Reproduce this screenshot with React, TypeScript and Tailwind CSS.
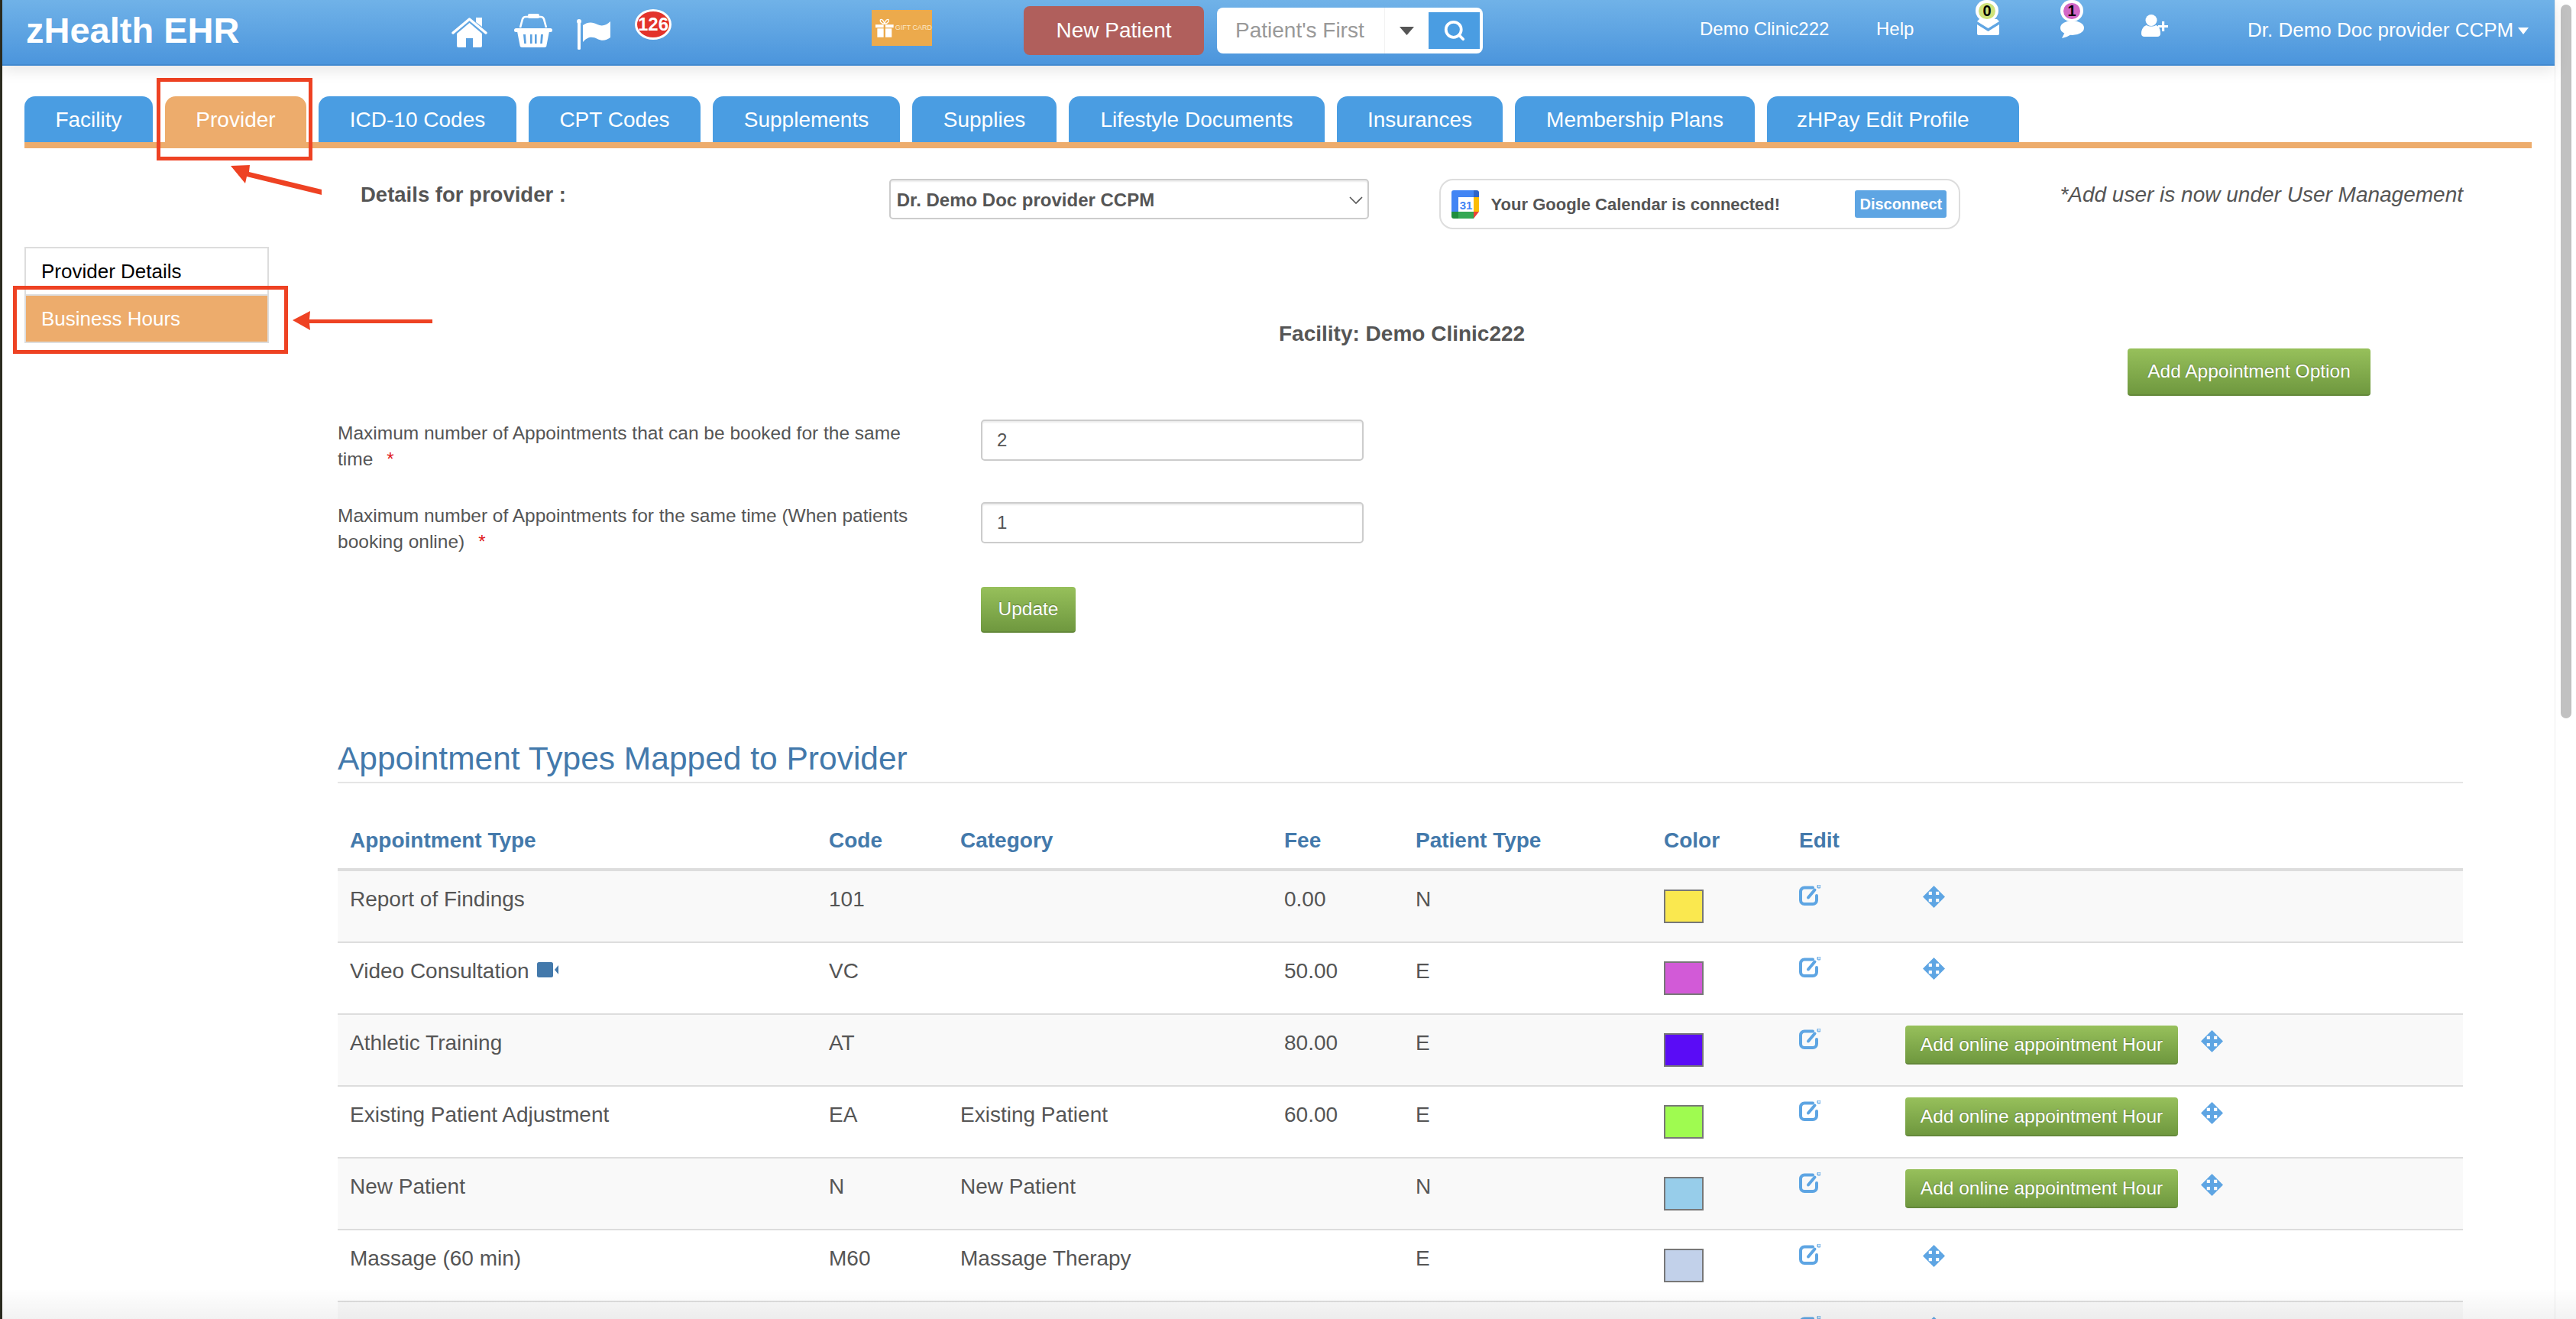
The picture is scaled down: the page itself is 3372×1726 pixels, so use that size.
import { Search } from "lucide-react";

const TABS: { label: string; width: string; active?: boolean; pad?: boolean }[] = [
  { label: "Facility", width: "w-[168px]" },
  { label: "Provider", width: "w-[185px]", active: true },
  { label: "ICD-10 Codes", width: "w-[259px]" },
  { label: "CPT Codes", width: "w-[225px]" },
  { label: "Supplements", width: "w-[245px]" },
  { label: "Supplies", width: "w-[189px]" },
  { label: "Lifestyle Documents", width: "w-[335px]" },
  { label: "Insurances", width: "w-[217px]" },
  { label: "Membership Plans", width: "w-[314px]" },
  { label: "zHPay Edit Profile", width: "w-[330px]", pad: true },
];

const ROWS: {
  name: string;
  code: string;
  category: string;
  fee: string;
  patient: string;
  color: string;
  video?: boolean;
  online?: boolean;
}[] = [
  { name: "Report of Findings", code: "101", category: "", fee: "0.00", patient: "N", color: "bg-[#fae84f]" },
  { name: "Video Consultation", code: "VC", category: "", fee: "50.00", patient: "E", color: "bg-[#d25ad7]", video: true },
  { name: "Athletic Training", code: "AT", category: "", fee: "80.00", patient: "E", color: "bg-[#5a0cf6]", online: true },
  { name: "Existing Patient Adjustment", code: "EA", category: "Existing Patient", fee: "60.00", patient: "E", color: "bg-[#9ffb50]", online: true },
  { name: "New Patient", code: "N", category: "New Patient", fee: "", patient: "N", color: "bg-[#97cdea]", online: true },
  { name: "Massage (60 min)", code: "M60", category: "Massage Therapy", fee: "", patient: "E", color: "bg-[#c2d1ea]" },
  { name: "", code: "", category: "", fee: "", patient: "", color: "bg-transparent" },
];

const GREEN_BTN =
  "rounded-[4px] border-b-2 border-[#64883a] bg-gradient-to-b from-[#97c05b] to-[#6f983f] text-[24.5px] text-white [text-shadow:0_-1px_1px_rgba(0,0,0,0.3)]";

/* ---- Header icons ---- */

function HomeIcon() {
  return (
    <svg viewBox="0 0 47 39" className="h-[39px] w-[47px]" fill="white">
      <path d="M32 0h8v12l-8-6z" />
      <path d="M2 20 23.5 2 45 20" fill="none" stroke="white" strokeWidth="3.5" strokeLinecap="round" strokeLinejoin="round" />
      <path d="M7 21 23.5 7 40 21v16a2 2 0 0 1-2 2H28V27h-9v12H9a2 2 0 0 1-2-2z" />
    </svg>
  );
}

function BasketIcon() {
  return (
    <svg viewBox="0 0 50 44" className="h-[44px] w-[50px]" fill="white">
      <path d="M8 18 11 7q1-3 4-3h20q3 0 4 3l3 11" fill="none" stroke="white" strokeWidth="2.6" />
      <rect x="18" y="0" width="15" height="6" rx="2" />
      <rect x="0" y="19" width="50" height="5" rx="2.5" />
      <path
        fillRule="evenodd"
        d="M4 23h42l-3.5 18a3 3 0 0 1-3 3h-29a3 3 0 0 1-3-3zM12 27l1.2 12h2.6L15 27zM21 27v12h2.6V27zM27 27v12h2.6V27zM35 27l-.8 12h2.6L38 27z"
      />
    </svg>
  );
}

function FlagIcon() {
  return (
    <svg viewBox="0 0 44 40" className="h-[40px] w-[44px]" fill="white">
      <circle cx="3" cy="3" r="3" />
      <rect x="1" y="3" width="4" height="37" rx="1.5" />
      <path d="M8 8C15 3 21 4 27 7s12 1 17-4v21c-5 4-11 5-17 2S15 22 8 30z" />
    </svg>
  );
}

function EnvelopeIcon() {
  return (
    <svg viewBox="0 0 29 23" className="h-[23px] w-[29px]" fill="white">
      <path d="M3 2h23l3 3-14.500 9L0 5z" />
      <path d="M0 9l14.500 9L29 9v12a2 2 0 0 1-2 2H2a2 2 0 0 1-2-2z" />
    </svg>
  );
}

function ChatIcon() {
  return (
    <svg viewBox="0 0 31 23" className="h-[23px] w-[31px]" fill="white">
      <ellipse cx="15.500" cy="9.500" rx="15.500" ry="9.500" />
      <path d="M6 15 2 23c5-1 9-3 12-5z" />
    </svg>
  );
}

function UserPlusIcon() {
  return (
    <svg viewBox="0 0 36 29" className="h-[29px] w-[36px]" fill="white">
      <circle cx="13" cy="7.500" r="7.500" />
      <path d="M0 25c0-6 3-10 7-11 3 2 9 2 12 0 4 1 6 5 6 11 0 2.500-1.500 4-4 4H4c-2.500 0-4-1.500-4-4z" />
      <path d="M27 9h3.200v5H35v3h-4.800v5H27v-5h-5v-3h5z" />
    </svg>
  );
}

function GiftDrawing() {
  return (
    <svg viewBox="0 0 30 31" className="h-[31px] w-[30px]" fill="white">
      <path d="M15 9C10 8 7 5 8 2c2-2 6 1 7 7 1-6 5-9 7-7 1 3-2 6-7 7z" fill="none" stroke="white" strokeWidth="1.600" />
      <rect x="0" y="10" width="13.500" height="5" />
      <rect x="16.500" y="10" width="13.500" height="5" />
      <rect x="3" y="16.500" width="10.500" height="14.500" />
      <rect x="16.500" y="16.500" width="10.500" height="14.500" />
    </svg>
  );
}

function CountBadge({ count, tint }: { count: string; tint: string }) {
  return (
    <span className="absolute left-0 top-0 flex h-[28px] w-[30px] items-center justify-center rounded-full bg-white">
      <span className={"flex h-[21px] w-[22px] items-center justify-center rounded-full text-[20px] font-bold leading-none text-black " + tint}>
        {count}
      </span>
    </span>
  );
}

function Header() {
  return (
    <header className="relative z-10 flex h-[86px] items-start border-b-2 border-[#4189cf] bg-gradient-to-b from-[#70b2e8] to-[#4b95dc] text-white shadow-[0_6px_18px_rgba(0,0,0,0.1)]">
      <div className="ml-[31px] w-[290px] whitespace-nowrap text-[47px] font-bold leading-[80px]">zHealth EHR</div>
      <div className="ml-[267px] mt-[23px]">
        <HomeIcon />
      </div>
      <div className="ml-[35px] mt-[18px]">
        <BasketIcon />
      </div>
      <div className="ml-[32px] mt-[25px]">
        <FlagIcon />
      </div>
      <div className="ml-[32px] mt-[12px] flex h-[40px] w-[48px] items-center justify-center rounded-[50%] border-[3px] border-white bg-[#e3332b] text-[24px] font-bold leading-none">
        126
      </div>
      <div className="ml-[262px] mt-[13px] flex h-[47px] w-[79px] items-center bg-[#ecaa4c] pl-[5px]">
        <GiftDrawing />
        <span className="ml-[2px] whitespace-nowrap text-[9px] leading-none text-[#fbe8c8]">GIFT CARD</span>
      </div>
      <div className="ml-[120px] mt-[8px] flex h-[64px] w-[236px] items-center justify-center rounded-[8px] bg-[#b05f5c] text-[28px]">
        New Patient
      </div>
      <div className="ml-[17px] mt-[10px] flex h-[60px] w-[348px] rounded-[8px] bg-white">
        <div className="flex w-[219px] items-center pl-[24px] text-[28px] text-[#999]">Patient's First</div>
        <div className="flex w-[58px] items-center border-l border-[#f2f2f2] pl-[19px]">
          <svg viewBox="0 0 19 11" className="h-[11px] w-[19px]" fill="#555">
            <path d="M0 0h19L9.500 11z" />
          </svg>
        </div>
        <div className="mt-[6px] flex h-[48px] w-[67px] items-center justify-center bg-[#4a9de2]">
          <Search size={30} strokeWidth={3} color="white" />
        </div>
      </div>
      <div className="ml-[284px] w-[170px] whitespace-nowrap text-[24px] leading-[76px]">Demo Clinic222</div>
      <div className="ml-[61px] w-[49px] text-[24px] leading-[76px]">Help</div>
      <div className="relative ml-[83px] mt-[23px] h-[23px] w-[29px]">
        <EnvelopeIcon />
        <span className="absolute -left-[2px] -top-[23px] h-[28px] w-[30px]">
          <CountBadge count="0" tint="bg-[#cfe27a]" />
        </span>
      </div>
      <div className="relative ml-[80px] mt-[27px] h-[23px] w-[31px]">
        <ChatIcon />
        <span className="absolute left-0 -top-[27px] h-[28px] w-[30px]">
          <CountBadge count="1" tint="bg-[#d266c6]" />
        </span>
      </div>
      <div className="ml-[75px] mt-[19px]">
        <UserPlusIcon />
      </div>
      <div className="ml-[103px] whitespace-nowrap text-[26px] leading-[78px]">Dr. Demo Doc provider CCPM</div>
      <svg viewBox="0 0 14 9" className="ml-[6px] mt-[36px] h-[9px] w-[14px]" fill="white">
        <path d="M0 0h14L7 9z" />
      </svg>
    </header>
  );
}

/* ---- Table icons ---- */

function EditIcon() {
  return (
    <svg viewBox="0 0 28 27" className="h-[27px] w-[28px]" fill="none" stroke="#5ea5e3" strokeWidth="4" strokeLinecap="round">
      <path d="M18 3.500H7a5 5 0 0 0-5 5v11.500a5 5 0 0 0 5 5h11a5 5 0 0 0 5-5v-6" />
      <path d="M12 16.500 20.500 6.500" />
      <circle cx="26" cy="2" r="0.600" fill="#5ea5e3" />
    </svg>
  );
}

function MoveIcon() {
  return (
    <svg viewBox="0 0 28 28" className="h-[29px] w-[29px]" fill="#5ea5e3">
      <path
        fillRule="evenodd"
        d="M14 0 28 14 14 28 0 14zM7.500 7.500v4h4v-4zM16.500 7.500v4h4v-4zM7.500 16.500v4h4v-4zM16.500 16.500v4h4v-4z"
      />
    </svg>
  );
}

function VideoIcon() {
  return (
    <svg viewBox="0 0 28 20" className="ml-[10px] -mt-[8px] inline-block h-[20px] w-[28px]" fill="#4379ab">
      <rect x="0" y="0" width="21" height="20" rx="2.500" />
      <path d="M23 10 28 4v12z" />
    </svg>
  );
}

function AppointmentTable() {
  return (
    <table className="w-full table-fixed border-separate border-spacing-0 text-[28px] leading-[34px] text-[#555]">
      <colgroup>
        <col className="w-[643px]" />
        <col className="w-[172px]" />
        <col className="w-[424px]" />
        <col className="w-[172px]" />
        <col className="w-[325px]" />
        <col className="w-[177px]" />
        <col className="w-[139px]" />
        <col />
      </colgroup>
      <thead>
        <tr className="text-left font-bold text-[#4379ab]">
          <th className="h-[115px] border-b-4 border-[#ddd] pl-[16px] pt-[58px] align-top">Appointment Type</th>
          <th className="border-b-4 border-[#ddd] pt-[58px] align-top">Code</th>
          <th className="border-b-4 border-[#ddd] pt-[58px] align-top">Category</th>
          <th className="border-b-4 border-[#ddd] pt-[58px] align-top">Fee</th>
          <th className="border-b-4 border-[#ddd] pt-[58px] align-top">Patient Type</th>
          <th className="border-b-4 border-[#ddd] pt-[58px] align-top">Color</th>
          <th className="border-b-4 border-[#ddd] pt-[58px] align-top">Edit</th>
          <th className="border-b-4 border-[#ddd]" />
        </tr>
      </thead>
      <tbody>
        {ROWS.map((row, i) => (
          <tr key={i} className={i % 2 === 0 ? "bg-[#f9f9f9]" : "bg-white"}>
            <td className="h-[94px] border-b-2 border-[#ddd] pl-[16px] pt-[20px] align-top">
              {row.name}
              {row.video && <VideoIcon />}
            </td>
            <td className="border-b-2 border-[#ddd] pt-[20px] align-top">{row.code}</td>
            <td className="border-b-2 border-[#ddd] pt-[20px] align-top">{row.category}</td>
            <td className="border-b-2 border-[#ddd] pt-[20px] align-top">{row.fee}</td>
            <td className="border-b-2 border-[#ddd] pt-[20px] align-top">{row.patient}</td>
            <td className="border-b-2 border-[#ddd] pt-[24px] align-top">
              <div className={"h-[44px] w-[52px] border-2 border-[#777] " + row.color} />
            </td>
            <td className="border-b-2 border-[#ddd] pt-[18px] align-top">
              <EditIcon />
            </td>
            <td className="border-b-2 border-[#ddd] align-top">
              {row.online ? (
                <div className="flex items-start pt-[14px]">
                  <div className={"flex h-[51px] w-[357px] items-center justify-center whitespace-nowrap " + GREEN_BTN}>
                    Add online appointment Hour
                  </div>
                  <div className="ml-[30px] mt-[6px]">
                    <MoveIcon />
                  </div>
                </div>
              ) : (
                <div className="ml-[23px] pt-[19px]">
                  <MoveIcon />
                </div>
              )}
            </td>
          </tr>
        ))}
      </tbody>
    </table>
  );
}

function FormRow({ label, value, className }: { label: string; value: string; className: string }) {
  return (
    <div className={"grid h-[54px] grid-cols-[842px_501px] " + className}>
      <div className="w-[770px] pt-[1px] text-[24.5px] leading-[34px] text-[#555]">
        {label}
        <span className="ml-[18px] text-[24px] leading-[20px] text-[#e02020]">*</span>
      </div>
      <input
        readOnly
        value={value}
        className="h-[54px] rounded-[5px] border-2 border-[#ccc] pl-[19px] text-[24px] text-[#555] shadow-[inset_0_2px_2px_rgba(0,0,0,0.08)]"
      />
    </div>
  );
}

function CalendarLogo() {
  return (
    <svg viewBox="0 0 36 37" className="h-[37px] w-[36px]">
      <path d="M3 0h26v9H9v19H0V3a3 3 0 0 1 3-3z" fill="#4285f4" />
      <path d="M29 0h4a3 3 0 0 1 3 3v6h-7z" fill="#2f64c8" />
      <path d="M29 9h7v19h-7z" fill="#fbbc04" />
      <path d="M9 28h20v9H9z" fill="#34a853" />
      <path d="M0 28h9v9H3a3 3 0 0 1-3-3z" fill="#1e8e3e" />
      <path d="M29 28h7l-7 9z" fill="#ea4335" />
      <text x="19" y="25" textAnchor="middle" fontSize="15" fontWeight="700" fill="#4285f4" fontFamily="Liberation Sans, sans-serif">
        31
      </text>
    </svg>
  );
}

export default function App() {
  return (
    <div className="relative flex h-[1726px] w-[3372px] overflow-hidden bg-[#2c2c20] [font-family:Liberation_Sans,Arial,sans-serif]">
      <main className="ml-[3px] h-full w-[3341px] bg-white">
        <Header />

        {/* tabs */}
        <div className="ml-[29px] mt-[40px] flex gap-[16px]">
          {TABS.map((tab) => (
            <div
              key={tab.label}
              className={
                "flex h-[60px] items-center rounded-t-[14px] pt-[2px] text-[28px] text-white " +
                tab.width +
                (tab.pad ? " pl-[39px] " : " justify-center ") +
                (tab.active ? "bg-[#edac6c]" : "bg-[#4a9de2]")
              }
            >
              {tab.label}
            </div>
          ))}
        </div>
        <div className="ml-[29px] h-[8px] w-[3282px] bg-[#edac6c]" />

        <div className="flex">
          {/* sidebar */}
          <aside className="ml-[29px] w-[320px] pt-[129px] text-[26px]">
            <div className="flex h-[62px] items-center border-2 border-b-0 border-[#ddd] pl-[20px] text-black">Provider Details</div>
            <div className="flex h-[64px] items-center border-2 border-[#ddd] bg-[#edac6c] pl-[20px] text-white">Business Hours</div>
          </aside>

          <section className="ml-[90px] w-[2782px]">
            {/* provider picker row */}
            <div className="mt-[40px] flex h-[66px] items-start text-[#555]">
              <div className="ml-[30px] w-[692px] text-[27.5px] font-bold leading-[42px]">Details for provider :</div>
              <div className="flex h-[53px] w-[628px] items-center justify-between rounded-[5px] border-2 border-[#ccc] pl-[8px] pr-[6px] pt-[2px] text-[24px] font-bold shadow-[inset_0_2px_2px_rgba(0,0,0,0.08)]">
                Dr. Demo Doc provider CCPM
                <svg viewBox="0 0 18 10" className="h-[10px] w-[18px]" fill="none" stroke="#555" strokeWidth="1.600">
                  <path d="M1 1l8 8 8-8" />
                </svg>
              </div>
              <div className="ml-[92px] flex h-[66px] w-[683px] items-center rounded-[18px] border-2 border-[#ddd] pl-[14px] pr-[16px]">
                <CalendarLogo />
                <span className="ml-[16px] flex-1 text-[22px] font-bold">Your Google Calendar is connected!</span>
                <span className="flex h-[36px] w-[120px] items-center justify-center rounded-[3px] bg-[#5ea5e3] text-[20px] font-bold text-white">
                  Disconnect
                </span>
              </div>
              <div className="ml-[130px] whitespace-nowrap text-[28px] italic leading-[42px]">*Add user is now under User Management</div>
            </div>

            <div className="mt-[121px] pl-[1232px] text-[28px] font-bold leading-[32px] text-[#555]">Facility: Demo Clinic222</div>
            <div className={"ml-[2343px] mt-[3px] flex h-[62px] w-[318px] items-center justify-center " + GREEN_BTN}>Add Appointment Option</div>

            <FormRow
              className="mt-[31px]"
              label="Maximum number of Appointments that can be booked for the same time"
              value="2"
            />
            <FormRow
              className="mt-[54px]"
              label="Maximum number of Appointments for the same time (When patients booking online)"
              value="1"
            />
            <div className={"ml-[842px] mt-[57px] flex h-[60px] w-[124px] items-center justify-center " + GREEN_BTN}>Update</div>

            <h2 className="mt-[137px] border-b-2 border-[#e5e5e5] pb-[2px] text-[42.5px] leading-[56px] text-[#4379ab]">
              Appointment Types Mapped to Provider
            </h2>
            <AppointmentTable />
          </section>
        </div>
      </main>

      {/* scrollbar */}
      <div className="h-full w-[28px] border-l border-[#eee] bg-white pl-[7px] pt-[6px]">
        <div className="h-[934px] w-[14px] rounded-full bg-[#c1c1c1]" />
      </div>

      {/* red annotations drawn over the page */}
      <div className="absolute left-[205px] top-[102px] h-[108px] w-[204px] border-[5px] border-[#ee4223]" />
      <div className="absolute left-[17px] top-[374px] h-[89px] w-[360px] border-[5px] border-[#ee4223]" />
      <svg viewBox="0 0 130 48" className="absolute left-[296px] top-[212px] h-[48px] w-[130px]" fill="#ee4223">
        <path d="M6 5 31 4 30 13 125 36V43L27 19 25 28z" />
      </svg>
      <svg viewBox="0 0 190 32" className="absolute left-[380px] top-[404px] h-[32px] w-[190px]" fill="#ee4223">
        <path d="M3 15 26 3 25 14H186V19H25L26 28z" />
      </svg>

      {/* window vignette along the bottom */}
      <div className="pointer-events-none absolute inset-x-0 bottom-0 h-[40px] bg-gradient-to-b from-transparent to-black/5" />
    </div>
  );
}
